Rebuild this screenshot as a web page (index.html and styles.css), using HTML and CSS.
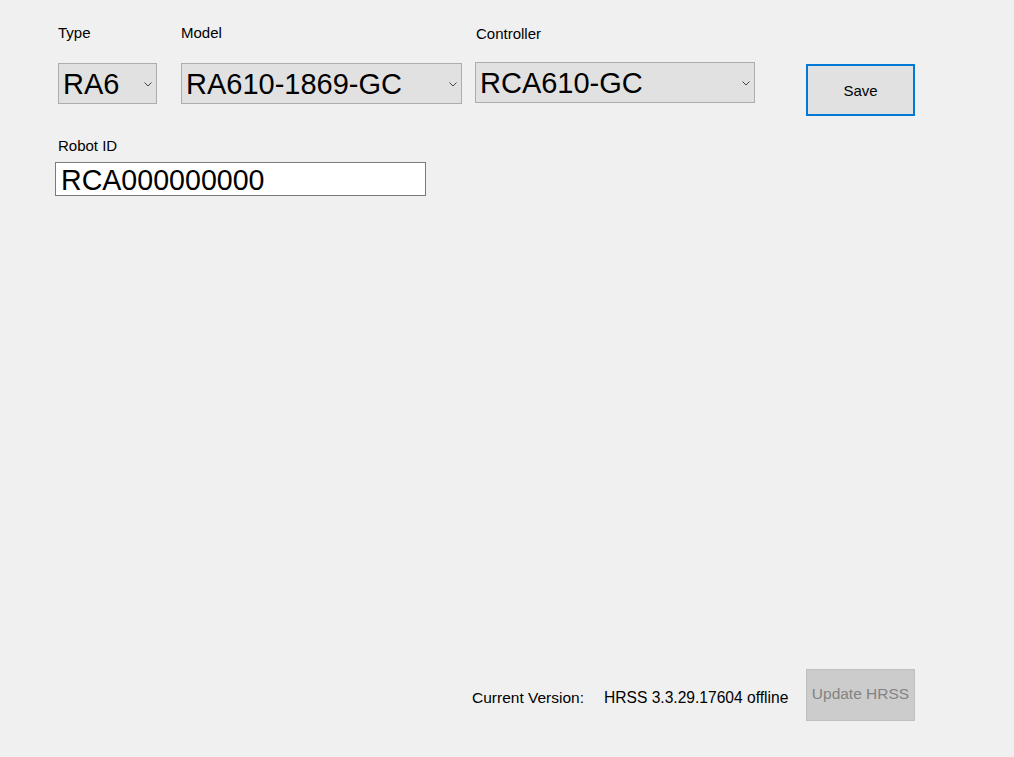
FILE: index.html
```html
<!DOCTYPE html>
<html>
<head>
<meta charset="utf-8">
<link rel="stylesheet" href="styles.css">
</head>
<body>
<div class="page">
  <div class="top">
    <div class="field f-type">
      <div class="label">Type</div>
      <div class="combo w-type"><span class="val">RA6</span><svg class="chev" width="8" height="5" viewBox="0 0 8 5"><path d="M0.5 0.5 L4 4 L7.5 0.5" fill="none" stroke="#444" stroke-width="1"/></svg></div>
    </div>
    <div class="field f-model">
      <div class="label">Model</div>
      <div class="combo w-model"><span class="val">RA610-1869-GC</span><svg class="chev" width="8" height="5" viewBox="0 0 8 5"><path d="M0.5 0.5 L4 4 L7.5 0.5" fill="none" stroke="#444" stroke-width="1"/></svg></div>
    </div>
    <div class="field f-ctrl">
      <div class="label lbl-ctrl">Controller</div>
      <div class="combo w-ctrl"><span class="val">RCA610-GC</span><svg class="chev" width="8" height="5" viewBox="0 0 8 5"><path d="M0.5 0.5 L4 4 L7.5 0.5" fill="none" stroke="#444" stroke-width="1"/></svg></div>
    </div>
    <button class="btn-save">Save</button>
  </div>
  <div class="robot">
    <div class="label lbl-robot">Robot ID</div>
    <div class="input">RCA000000000</div>
  </div>
  <div class="bottom">
    <span class="cur">Current Version:</span>
    <span class="ver">HRSS 3.3.29.17604 offline</span>
    <button class="btn-update" disabled>Update HRSS</button>
  </div>
</div>
</body>
</html>
```
FILE: styles.css
```css
* { box-sizing: border-box; }
html, body { margin: 0; padding: 0; }
body {
  background: #f0f0f0;
  font-family: "Liberation Sans", Arial, sans-serif;
  color: #000;
}
.page {
  height: 757px;
  display: flex;
  flex-direction: column;
  padding: 22px 0 36px 0;
}
.top {
  display: flex;
  align-items: flex-start;
}
.field { display: flex; flex-direction: column; }
.label {
  font-size: 15px;
  line-height: 22px;
  height: 22px;
  margin-bottom: 19px;
}
.f-type { margin-left: 58px; }
.f-model { margin-left: 24px; }
.f-ctrl { margin-left: 13px; }
.lbl-ctrl { margin-top: 1px; margin-bottom: 17px; padding-left: 1px; }
.combo {
  height: 41px;
  background: #e1e1e1;
  border: 1px solid #adadad;
  display: flex;
  align-items: center;
  justify-content: space-between;
  padding: 0 4px 0 4px;
}
.val {
  font-size: 29px;
  line-height: 36px;
  white-space: nowrap;
}
.chev { flex: none; margin-top: 1px; }
.w-type { width: 99px; }
.w-model { width: 281px; }
.w-ctrl { width: 280px; }
.btn-save {
  margin-left: 51px;
  margin-top: 42px;
  width: 109px;
  height: 52px;
  background: #e1e1e1;
  border: 2px solid #0078d7;
  font-family: "Liberation Sans", Arial, sans-serif;
  font-size: 15px;
  color: #000;
  padding: 0;
}
.robot {
  display: flex;
  flex-direction: column;
  align-items: flex-start;
  margin-top: 19px;
}
.lbl-robot { margin-left: 58px; margin-bottom: 5px; }
.input {
  margin-left: 55px;
  width: 371px;
  height: 34px;
  background: #fff;
  border: 1px solid #7a7a7a;
  font-size: 28.6px;
  line-height: 34px;
  padding-left: 5px;
  white-space: nowrap;
}
.bottom {
  margin-top: auto;
  display: flex;
  align-items: center;
  padding-left: 472px;
  font-size: 15.5px;
}
.cur { width: 132px; padding-top: 5px; }
.ver { font-size: 15.6px; padding-top: 5px; width: 202px; }
.btn-update {
  width: 109px;
  height: 52px;
  background: #cccccc;
  border: 1px solid #bfbfbf;
  color: #838383;
  font-family: "Liberation Sans", Arial, sans-serif;
  font-size: 15.5px;
  padding: 0;
  padding-bottom: 2px;
}
```
